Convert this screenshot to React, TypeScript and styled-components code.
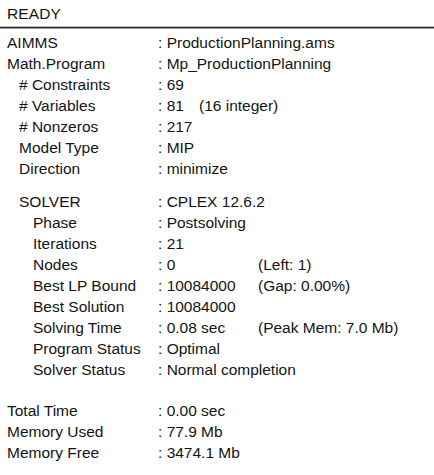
import styled, { createGlobalStyle } from "styled-components";

const GlobalStyle = createGlobalStyle`
  html, body {
    margin: 0;
    padding: 0;
    background: #ffffff;
  }
  body {
    font-family: "Liberation Sans", Arial, sans-serif;
    font-size: 15.5px;
    color: #141414;
  }
`;

type Item = {
  label: string;
  value: string;
  note?: string;
  indent?: number;
};

const modelRows: Item[] = [
  { label: "AIMMS", value: "ProductionPlanning.ams" },
  { label: "Math.Program", value: "Mp_ProductionPlanning" },
  { label: "# Constraints", value: "69", indent: 1 },
  { label: "# Variables", value: "81", note: "(16 integer)", indent: 1 },
  { label: "# Nonzeros", value: "217", indent: 1 },
  { label: "Model Type", value: "MIP", indent: 1 },
  { label: "Direction", value: "minimize", indent: 1 },
];

const solverRows: Item[] = [
  { label: "SOLVER", value: "CPLEX 12.6.2", indent: 1 },
  { label: "Phase", value: "Postsolving", indent: 2 },
  { label: "Iterations", value: "21", indent: 2 },
  { label: "Nodes", value: "0", note: "(Left: 1)", indent: 2 },
  { label: "Best LP Bound", value: "10084000", note: "(Gap: 0.00%)", indent: 2 },
  { label: "Best Solution", value: "10084000", indent: 2 },
  { label: "Solving Time", value: "0.08 sec", note: "(Peak Mem: 7.0 Mb)", indent: 2 },
  { label: "Program Status", value: "Optimal", indent: 2 },
  { label: "Solver Status", value: "Normal completion", indent: 2 },
];

const totalRows: Item[] = [
  { label: "Total Time", value: "0.00 sec" },
  { label: "Memory Used", value: "77.9 Mb" },
  { label: "Memory Free", value: "3474.1 Mb" },
];

function Section({ rows, noteAt }: { rows: Item[]; noteAt?: number }) {
  return (
    <Block>
      {rows.map((r) => (
        <Row key={r.label}>
          <Label $indent={r.indent || 0}>{r.label}</Label>
          <Value $width={r.note ? noteAt : undefined}>: {r.value}</Value>
          {r.note && <Note>{r.note}</Note>}
        </Row>
      ))}
    </Block>
  );
}

export default function App() {
  return (
    <Panel>
      <GlobalStyle />
      <Header>READY</Header>
      <Body>
        <Section rows={modelRows} noteAt={41} />
        <Section rows={solverRows} noteAt={100} />
        <Section rows={totalRows} />
      </Body>
    </Panel>
  );
}

const Panel = styled.div`
  width: 434px;
  height: 475px;
  background: #fff;
`;

const Header = styled.div`
  height: 26px;
  line-height: 27px;
  padding-left: 7px;
  letter-spacing: 0.1px;
  border-bottom: 1px solid #b8b8b8;
  box-shadow: 0 1px 0 #2a2a2a, 0 2px 0 #9a9a9a;
`;

const Body = styled.div`
  padding-top: 5px;
  padding-left: 7px;
  display: flex;
  flex-direction: column;
  gap: 12px;

  & > :last-child {
    margin-top: 8px;
  }
`;

const Block = styled.div`
  display: flex;
  flex-direction: column;
`;

const Row = styled.div`
  display: flex;
  height: 21px;
  line-height: 21px;
  white-space: nowrap;
`;

const Label = styled.span<{ $indent: number }>`
  width: 151px;
  box-sizing: border-box;
  padding-left: ${(p) => (p.$indent === 2 ? 26 : p.$indent === 1 ? 12 : 0)}px;
`;

const Value = styled.span<{ $width?: number }>`
  display: inline-block;
  width: ${(p) => (p.$width ? `${p.$width}px` : "auto")};
`;

const Note = styled.span``;
